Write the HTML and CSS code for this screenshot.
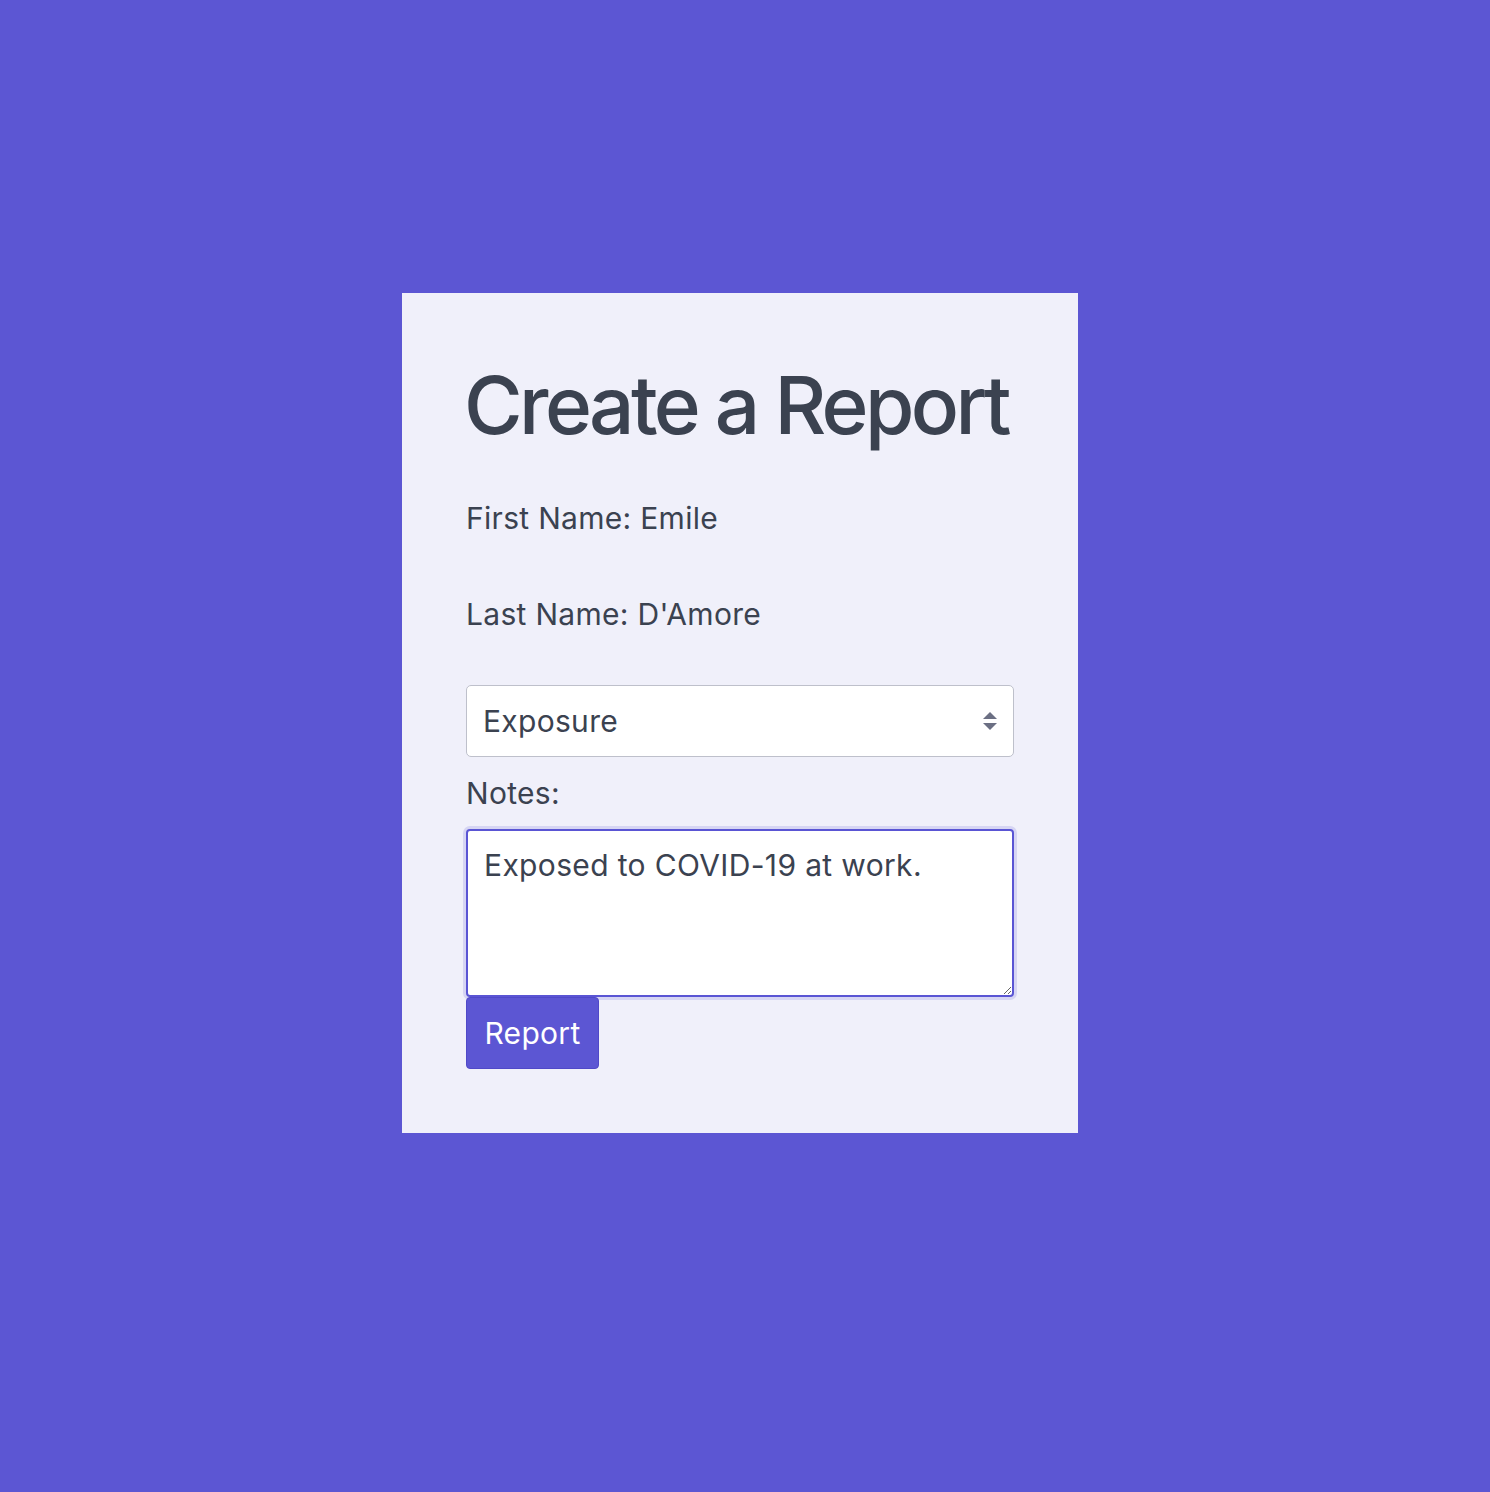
FILE: index.html
```html
<!DOCTYPE html>
<html lang="en">
<head>
<meta charset="utf-8">
<title>Create a Report</title>
<link rel="stylesheet" href="styles.css">
</head>
<body>
<main class="page">
  <section class="card">
    <h1 class="title">Create a Report</h1>
    <p class="field first">First Name: Emile</p>
    <p class="field last">Last Name: D'Amore</p>
    <div class="select-wrap">
      <select class="select">
        <option>Exposure</option>
      </select>
      <svg class="select-arrows" width="16" height="22" viewBox="0 0 16 22" aria-hidden="true">
        <path d="M8 2 L15 9 L1 9 Z" fill="#6b6f83"/>
        <path d="M1 13 L15 13 L8 20 Z" fill="#6b6f83"/>
      </svg>
    </div>
    <label class="notes-label" for="notes">Notes:</label>
    <textarea id="notes" class="notes">Exposed to COVID-19 at work.</textarea>
    <button class="btn" type="button">Report</button>
  </section>
</main>
</body>
</html>
```

FILE: styles.css
```css
html, body {
  margin: 0;
  padding: 0;
}
body {
  background: #5c56d3;
  font-family: Inter, "Noto Sans", "Liberation Sans", sans-serif;
  color: #3b4250;
  min-height: 1492px;
}
.page {
  display: flex;
  padding: 293px 0 0 402px;
}
.card {
  width: 676px;
  box-sizing: border-box;
  background: #f0f0fa;
  padding: 64px;
  display: flex;
  flex-direction: column;
  align-items: flex-start;
}
.title {
  margin: 0 0 0 -2px;
  font-size: 80px;
  font-weight: 500;
  line-height: 96px;
  letter-spacing: -3.6px;
  white-space: nowrap;
  color: #3b4250;
}
.field {
  margin: 0;
  font-size: 30px;
  line-height: 36px;
  letter-spacing: 0.3px;
}
.first {
  margin-top: 47px;
}
.last {
  margin-top: 60px;
}
.select-wrap {
  position: relative;
  width: 548px;
  margin-top: 53px;
}
.select {
  display: block;
  width: 100%;
  height: 72px;
  box-sizing: border-box;
  appearance: none;
  -webkit-appearance: none;
  background: #fff;
  border: 1px solid #bec0cb;
  border-radius: 5px;
  padding: 0 16px;
  font-family: inherit;
  font-size: 30px;
  letter-spacing: 0.3px;
  color: #3b4250;
}
.select-arrows {
  position: absolute;
  right: 16px;
  top: 25px;
}
.notes-label {
  margin-top: 18px;
  font-size: 30px;
  line-height: 36px;
  letter-spacing: 0.3px;
}
.notes {
  margin-top: 18px;
  width: 548px;
  height: 168px;
  box-sizing: border-box;
  background: #fff;
  border: 2px solid #5a55d4;
  border-radius: 4px;
  box-shadow: 0 0 0 3px #d6d5f3;
  padding: 16px 16px 14px;
  font-family: inherit;
  font-size: 30px;
  line-height: 36px;
  letter-spacing: 0.35px;
  color: #3b4250;
  outline: none;
  resize: both;
}
.btn {
  width: 133px;
  height: 72px;
  background: #5c56d3;
  border: 1px solid #5049c8;
  border-radius: 4px;
  color: #fff;
  font-family: inherit;
  font-size: 30px;
  letter-spacing: 0.3px;
  padding: 0;
}
```
